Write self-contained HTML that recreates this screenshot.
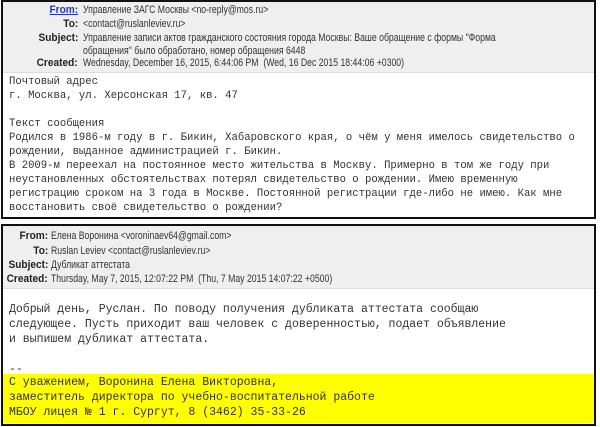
<!DOCTYPE html>
<html><head><meta charset="utf-8"><style>
body{margin:0;width:600px;height:427px;background:#fff;position:relative;overflow:hidden}
.box{position:absolute;left:1px;width:595px;border:2px solid #111;background:#fff;box-sizing:border-box}
.hd{position:absolute;left:0;right:0;top:0;background:#efefef;border-bottom:1px solid #ddd}
.r{position:absolute;font:11px "Liberation Sans","Noto Sans CJK SC",sans-serif;color:#333;white-space:nowrap;transform:scaleX(0.79);transform-origin:0 0}
.l{position:absolute;font:bold 11px "Liberation Sans",sans-serif;color:#222;text-align:right;white-space:nowrap;transform:scaleX(0.92);transform-origin:100% 0}
.m{position:absolute;left:6px;font-family:"Liberation Mono","DejaVu Sans Mono",monospace;color:#333;white-space:pre}
</style></head><body>
<div class="box" style="top:0;height:219px">
 <div class="hd" style="height:70px"></div>
 <div class="l" style="right:516px;top:2px;color:#2233cc;text-decoration:underline">From:</div>
 <div class="r" style="left:80px;top:2px">Управление ЗАГС Москвы &lt;no-reply@mos.ru&gt;</div>
 <div class="l" style="right:516px;top:16px">To:</div>
 <div class="r" style="left:80px;top:16px">&lt;contact@ruslanleviev.ru&gt;</div>
 <div class="l" style="right:516px;top:30px">Subject:</div>
 <div class="r" style="left:80px;top:30px;line-height:13px">Управление записи актов гражданского состояния города Москвы: Ваше обращение с формы "Форма<br>обращения" было обработано, номер обращения 6448</div>
 <div class="l" style="right:516px;top:55px">Created:</div>
 <div class="r" style="left:80px;top:55px">Wednesday, December 16, 2015, 6:44:06 PM &nbsp;(Wed, 16 Dec 2015 18:44:06 +0300)</div>
 <div class="m" style="top:73px;font-size:10.6px;line-height:14px">Почтовый адрес
г. Москва, ул. Херсонская 17, кв. 47

Текст сообщения
Родился в 1986-м году в г. Бикин, Хабаровского края, о чём у меня имелось свидетельство о
рождении, выданное администрацией г. Бикин.
В 2009-м переехал на постоянное место жительства в Москву. Примерно в том же году при
неустановленных обстоятельствах потерял свидетельство о рождении. Имею временную
регистрацию сроком на 3 года в Москве. Постоянной регистрации где-либо не имею. Как мне
восстановить своё свидетельство о рождении?</div>
</div>
<div class="box" style="top:224px;height:202px">
 <div class="hd" style="height:62px"></div>
 <div class="l" style="right:546px;top:4px">From:</div>
 <div class="r" style="left:48px;top:4px">Елена Воронина &lt;voroninaev64@gmail.com&gt;</div>
 <div class="l" style="right:546px;top:19px">To:</div>
 <div class="r" style="left:48px;top:19px">Ruslan Leviev &lt;contact@ruslanleviev.ru&gt;</div>
 <div class="l" style="right:546px;top:33px">Subject:</div>
 <div class="r" style="left:48px;top:33px">Дубликат аттестата</div>
 <div class="l" style="right:546px;top:47px">Created:</div>
 <div class="r" style="left:48px;top:47px">Thursday, May 7, 2015, 12:07:22 PM &nbsp;(Thu, 7 May 2015 14:07:22 +0500)</div>
 <div class="m" style="top:76px;font-size:11.5px;line-height:15px">Добрый день, Руслан. По поводу получения дубликата аттестата сообщаю
следующее. Пусть приходит ваш человек с доверенностью, подает объявление
и выпишем дубликат аттестата.

--</div>
 <div style="position:absolute;left:0;right:0;top:148px;height:49px;background:#ffff00"></div>
 <div class="m" style="top:149px;font-size:11.5px;line-height:15px">С уважением, Воронина Елена Викторовна,
заместитель директора по учебно-воспитательной работе
МБОУ лицея № 1 г. Сургут, 8 (3462) 35-33-26</div>
</div>
</body></html>
